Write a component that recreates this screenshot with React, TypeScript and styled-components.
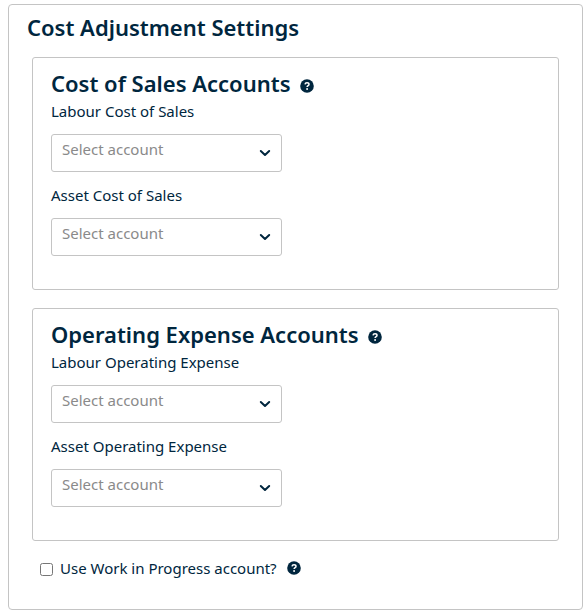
import React, { useId } from 'react';
import styled, { createGlobalStyle } from 'styled-components';

const GlobalStyle = createGlobalStyle`
  *, *::before, *::after { box-sizing: border-box; }
  body {
    margin: 0;
    background: #ffffff;
    color: #00263e;
    font-family: "Noto Sans", sans-serif;
    font-size: 15px;
  }
`;

const Card = styled.main`
  margin: 4px 4px 6px 8px;
  padding: 8px 23px 28px;
  border: 1px solid #c4c4c4;
  border-radius: 4px;
`;

const PageTitle = styled.h1`
  margin: 0 -5px 16px;
  font-size: 22px;
  line-height: 28px;
  font-weight: 600;
`;

const Panel = styled.section`
  margin-bottom: 18px;
  padding: 11px 18px 33px;
  border: 1px solid #c4c4c4;
  border-radius: 3px;
`;

const PanelHeader = styled.div`
  display: flex;
  align-items: center;
  gap: 9px;
  margin-bottom: 1px;
`;

const PanelTitle = styled.h2`
  margin: 0;
  font-size: 22px;
  line-height: 28px;
  font-weight: 600;
`;

const HelpButton = styled.button<{ $besideTitle?: boolean }>`
  display: flex;
  padding: ${({ $besideTitle }) => ($besideTitle ? '5px' : '0')} 0 0;
  border: 0;
  background: none;
  color: inherit;
  cursor: pointer;
`;

const Fields = styled.div`
  display: grid;
  gap: 10px;
`;

const Field = styled.div`
  display: grid;
  gap: 10px;
`;

const Label = styled.label`
  font-size: 15px;
  line-height: 26px;
`;

const SelectBox = styled.div`
  position: relative;
  width: 100%;
  max-width: 231px;
`;

const Select = styled.select`
  display: block;
  appearance: none;
  width: 100%;
  height: 38px;
  padding: 0 36px 8px 10px;
  border: 1px solid #c4c4c4;
  border-radius: 3px;
  background: #ffffff;
  color: #8a8a8a;
  font: inherit;
`;

const Chevron = styled.svg`
  position: absolute;
  top: 15px;
  right: 11px;
  pointer-events: none;
`;

const CheckRow = styled.div`
  display: flex;
  align-items: center;
  margin-top: -4px;
  padding-left: 8px;
`;

const Checkbox = styled.input`
  width: 13px;
  height: 13px;
  margin: 2px 7px 0 0;
`;

const CheckLabel = styled(Label)`
  margin-right: 10px;
`;

function Help({ topic, besideTitle }: { topic: string; besideTitle?: boolean }) {
  return (
    <HelpButton type="button" aria-label={`Help: ${topic}`} $besideTitle={besideTitle}>
      <svg width="14" height="14" viewBox="0 0 14 14" aria-hidden="true">
        <circle cx="7" cy="7" r="6.8" fill="currentColor" />
        <path
          d="M5 5.4C5.2 4.2 6 3.8 7 3.8C8.2 3.8 9 4.4 9 5.4C9 6.7 7.1 6.7 7.1 8.1"
          fill="none"
          stroke="#fff"
          strokeWidth="1.5"
        />
        <circle cx="7.1" cy="10" r="0.95" fill="#fff" />
      </svg>
    </HelpButton>
  );
}

function AccountField({ label }: { label: string }) {
  const id = useId();
  return (
    <Field>
      <Label htmlFor={id}>{label}</Label>
      <SelectBox>
        <Select id={id} defaultValue="">
          <option value="">Select account</option>
        </Select>
        <Chevron width="12" height="8" viewBox="0 0 12 8" aria-hidden="true">
          <path
            d="M1.8 2L6 6L10.2 2"
            fill="none"
            stroke="#00263e"
            strokeWidth="2"
            strokeLinecap="round"
            strokeLinejoin="round"
          />
        </Chevron>
      </SelectBox>
    </Field>
  );
}

function AccountPanel({ title, fields }: { title: string; fields: string[] }) {
  return (
    <Panel>
      <PanelHeader>
        <PanelTitle>{title}</PanelTitle>
        <Help topic={title} besideTitle />
      </PanelHeader>
      <Fields>
        {fields.map((field) => (
          <AccountField key={field} label={field} />
        ))}
      </Fields>
    </Panel>
  );
}

export default function App() {
  return (
    <>
      <GlobalStyle />
      <Card>
        <PageTitle>Cost Adjustment Settings</PageTitle>
        <AccountPanel
          title="Cost of Sales Accounts"
          fields={['Labour Cost of Sales', 'Asset Cost of Sales']}
        />
        <AccountPanel
          title="Operating Expense Accounts"
          fields={['Labour Operating Expense', 'Asset Operating Expense']}
        />
        <CheckRow>
          <Checkbox id="work-in-progress" type="checkbox" />
          <CheckLabel htmlFor="work-in-progress">Use Work in Progress account?</CheckLabel>
          <Help topic="Work in Progress account" />
        </CheckRow>
      </Card>
    </>
  );
}
